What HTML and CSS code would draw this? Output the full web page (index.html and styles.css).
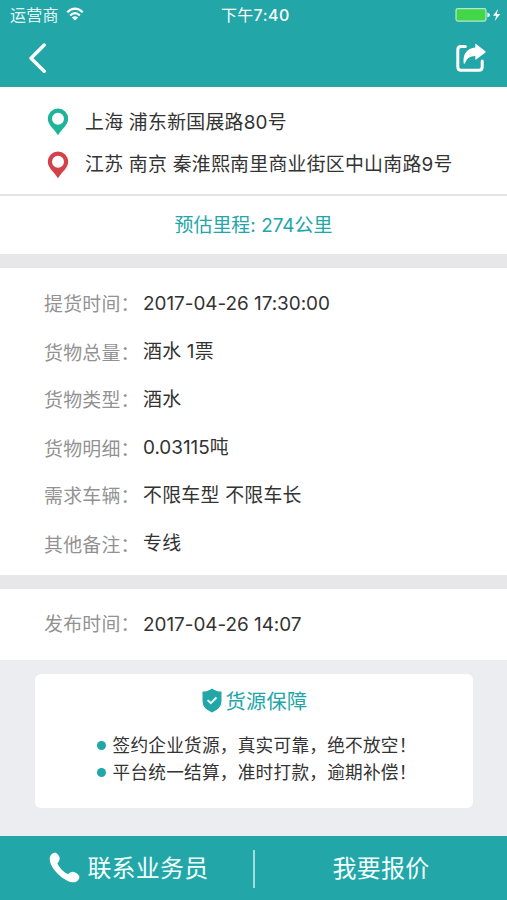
FILE: index.html
```html
<!DOCTYPE html>
<html lang="zh-CN">
<head>
<meta charset="utf-8">
<title>货源详情</title>
<link rel="stylesheet" href="styles.css">
</head>
<body>
<div class="screen">
  <header class="header">
    <div class="status">
      <div class="carrier"><span>运营商</span>
        <svg class="wifi" width="18" height="14" viewBox="0 0 18 14" fill="none" stroke="#fff" stroke-width="2.2"><path d="M1.2 5.2Q9-1.8 16.8 5.2M4.1 8.4Q9 4 13.9 8.4"/><path d="M5.9 10.4Q9 8 12.1 10.4L9 13.4Z" fill="#fff" stroke="none"/></svg>
      </div>
      <div class="time">下午<b>7:40</b></div>
      <div class="power">
        <svg width="46" height="14" viewBox="0 0 46 14"><rect x="1" y=".7" width="30" height="12.4" rx="1.8" fill="#43d649" stroke="#b4e8cf" stroke-width="1.2"/><path d="M32.3 4.4Q35 5 35 6.9T32.3 9.4Z" fill="#e4f7f3"/><path d="M43.1 1L38 7.8h3.2L39.8 13l5.4-7h-3.4Z" fill="#fff"/></svg>
      </div>
    </div>
    <nav class="nav">
      <svg width="20" height="32" viewBox="0 0 20 32" fill="none" stroke="#fff" stroke-width="3.4" stroke-linecap="round" stroke-linejoin="round"><path d="M18.2 3L5 16.2 18.2 29.2"/></svg>
      <svg width="32" height="30" viewBox="0 0 32 30"><path d="M10.3 3.5H6Q2.8 3.5 2.8 6.8V24Q2.8 27.2 6 27.2H24Q27.2 27.2 27.2 24V18" fill="none" stroke="#fff" stroke-width="3" stroke-linecap="round"/><path d="M20.3 1.2Q20.3.3 21 1L30.4 8.3Q31 9 30.4 9.6L21.1 16.6Q20.3 17.1 20.3 16V13Q12.3 13 9.8 20.4Q9.3 21.3 8.7 20.3C7.5 11 12.2 5.1 20.3 4.5Z" fill="#fff"/></svg>
    </nav>
  </header>

  <section class="route">
    <div class="stop">
      <svg class="pin pin-from" width="22" height="28" viewBox="0 0 22 28"><path fill-rule="evenodd" d="M11 .6A10.2 10.2 0 0 0 .8 10.8C.8 16.8 7 21 11 27.3 15 21 21.2 16.8 21.2 10.8A10.2 10.2 0 0 0 11 .6ZM11 4.8A6 6 0 1 1 11 16.8 6 6 0 1 1 11 4.8Z"/></svg>
      <span>上海 浦东新国展路80号</span>
    </div>
    <div class="stop">
      <svg class="pin pin-to" width="22" height="28" viewBox="0 0 22 28"><path fill-rule="evenodd" d="M11 .6A10.2 10.2 0 0 0 .8 10.8C.8 16.8 7 21 11 27.3 15 21 21.2 16.8 21.2 10.8A10.2 10.2 0 0 0 11 .6ZM11 4.8A6 6 0 1 1 11 16.8 6 6 0 1 1 11 4.8Z"/></svg>
      <span>江苏 南京 秦淮熙南里商业街区中山南路9号</span>
    </div>
  </section>
  <div class="mileage">预估里程: 274公里</div>

  <dl class="details">
    <dt>提货时间：</dt><dd class="num">2017-04-26 17:30:00</dd>
    <dt class="low">货物总量：</dt><dd>酒水 1票</dd>
    <dt>货物类型：</dt><dd>酒水</dd>
    <dt class="low">货物明细：</dt><dd class="num">0.03115吨</dd>
    <dt>需求车辆：</dt><dd>不限车型 不限车长</dd>
    <dt class="low">其他备注：</dt><dd>专线</dd>
  </dl>

  <dl class="published">
    <dt>发布时间：</dt><dd class="num">2017-04-26 14:07</dd>
  </dl>

  <main class="guarantee-area">
    <section class="guarantee">
      <h2><svg width="20" height="25" viewBox="0 0 20 25"><path d="M10 .5Q14 3.7 19.5 3.6V13Q19.5 20.5 10 24.5 .5 20.5 .5 13V3.6Q6 3.7 10 .5Z" fill="#22a6a7"/><path d="M5.6 12.1L8.8 15.2 14.5 9.5" fill="none" stroke="#e9fafa" stroke-width="2"/></svg><span>货源保障</span></h2>
      <ul>
        <li>签约企业货源，真实可靠，绝不放空！</li>
        <li>平台统一结算，准时打款，逾期补偿！</li>
      </ul>
    </section>
  </main>

  <footer class="actions">
    <div class="action contact"><svg width="31" height="31" viewBox="0 0 31 31"><path d="M.8 5.5Q2.5.8 6.3.6 10 2.5 10.8 6.5 10.5 9 8.4 11.5C10.6 16 14.3 19.8 18.9 22.3Q21 20 23.5 19.8 28.3 20.5 30.4 24.4 30.5 28.7 26.2 30.2C21 31.2 14.2 27.3 8.7 21.8 4 17 .1 11.2 .8 5.5Z" fill="#fff"/></svg><span>联系业务员</span></div>
    <div class="divider"></div>
    <div class="action quote">我要报价</div>
  </footer>
</div>
</body>
</html>
```

FILE: styles.css
```css
* { box-sizing: border-box; }
body { margin: 0; }
dl, dd, h2, ul { margin: 0; padding: 0; }
svg { display: block; flex: none; }
.screen {
  width: 507px;
  height: 900px;
  display: flex;
  flex-direction: column;
  overflow: hidden;
  background: #fff;
  color: #333;
  font: 18.9px/28px Inter, "Noto Sans CJK SC", sans-serif;
  letter-spacing: .25px;
  white-space: nowrap;
}
.header { height: 87px; flex: none; background: #22a6a7; color: #fff; }
.status {
  height: 30px;
  padding: 0 6px 0 10px;
  display: grid;
  grid-template-columns: 1fr auto 1fr;
  align-items: center;
  font-size: 16px;
}
.carrier { display: flex; align-items: center; gap: 7px; color: #e4f6f5; }
.carrier svg { margin-top: -2px; }
.time b { font-weight: 500; letter-spacing: .5px; }
.power { justify-self: end; }
.nav { height: 55px; padding: 0 20.5px 0 26px; display: flex; justify-content: space-between; align-items: center; }

.route { height: 109px; flex: none; padding: 14px 46px 0 46.5px; border-bottom: 2px solid #e3e3e4; }
.stop { height: 42.5px; display: flex; align-items: center; gap: 16.5px; }
.stop:first-child span { padding-top: 1px; }
.pin-from { fill: #1eb499; }
.pin-to { fill: #d34248; }
.mileage { height: 58px; flex: none; line-height: 60px; text-align: center; letter-spacing: .05px; color: #22a6a7; }

.details, .published {
  flex: none;
  display: grid;
  grid-template-columns: 99px 1fr;
  padding-left: 44px;
  align-items: center;
  border-top: 14px solid #e7e7e9;
}
.details { height: 321px; grid-auto-rows: 48px; padding-top: 12px; }
.published { height: 85px; }
dt { color: #929292; padding-top: 1px; }
.num { letter-spacing: -.02px; }
.low { padding-top: 3px; }

.guarantee-area { height: 176px; flex: none; background: #ecedf1; padding: 14px 34px 0 35px; }
.guarantee { height: 134px; background: #fff; border-radius: 6px; padding-top: 13px; }
.guarantee h2 {
  display: flex;
  justify-content: center;
  align-items: center;
  gap: 4px;
  height: 28px;
  padding-left: 1px;
  color: #22a6a7;
  font-size: 20.2px;
  font-weight: 400;
}
.guarantee h2 svg { margin-top: -2px; }
.guarantee h2 span { padding-top: 2px; }
.guarantee ul { list-style: none; padding: 17px 0 0 61.5px; font-size: 17.65px; line-height: 27px; }
.guarantee li { display: flex; align-items: center; gap: 7px; }
.guarantee li::before { content: ""; width: 9px; height: 9px; border-radius: 50%; background: #22a6a7; }

.actions { height: 65px; flex: none; display: flex; align-items: center; background: #22a6a7; color: #f2ffff; font-size: 24px; }
.action { flex: 1; display: flex; align-items: center; justify-content: center; }
.contact { flex: 0 0 253px; gap: 7px; padding-left: 5px; }
.contact svg { margin-top: -2px; }
.contact span, .quote { padding-top: 1px; }
.divider { width: 2px; height: 38px; background: #a0dddd; }
```
